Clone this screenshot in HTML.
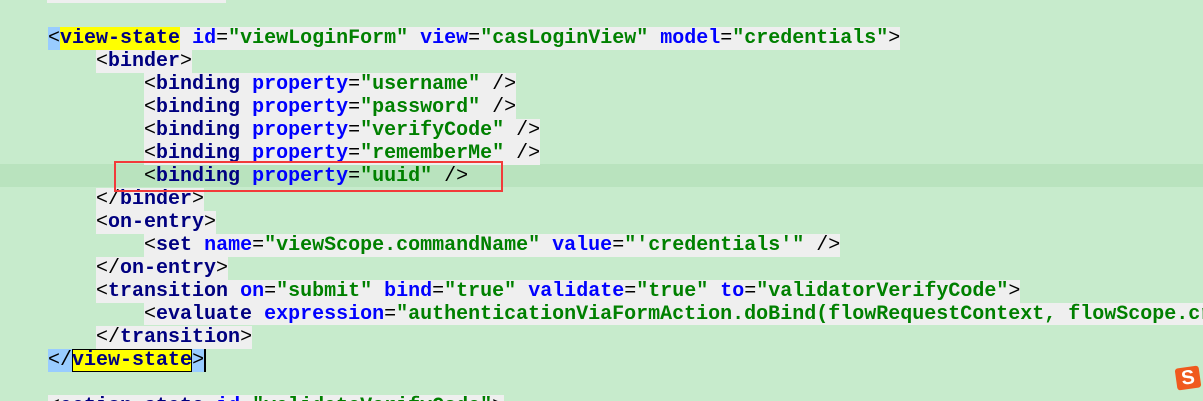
<!DOCTYPE html><html style="overflow:hidden"><head><style>
html,body{margin:0;width:1203px;height:401px;overflow:hidden}
body{background:#c7ebcc;font-family:"Liberation Mono",monospace;font-size:20px;position:relative}
.r{position:absolute;left:0;height:23px;line-height:25px;white-space:pre;width:1203px}
.t{background:#efefef}
.n{color:#000080;font-weight:bold}.a{color:#0000ff;font-weight:bold}.v{color:#008000;font-weight:bold}.p{color:#000}
.y{background:#ffff00}.b{background:#99ccff}
</style></head><body>
<div style="position:absolute;left:47px;top:0;width:179px;height:3px;background:#efefef"></div>
<div class="r" style="top:164px;background:#b9e3be"></div>
<div class="r" style="top:26px">    <span class="t"><span class="b p">&lt;</span><span class="n y">view-state</span> <span class="a">id</span>=<span class="v">"viewLoginForm"</span> <span class="a">view</span>=<span class="v">"casLoginView"</span> <span class="a">model</span>=<span class="v">"credentials"</span><span class="p">&gt;</span></span></div>
<div class="r" style="top:49px">        <span class="t"><span class="p">&lt;</span><span class="n">binder</span><span class="p">&gt;</span></span></div>
<div class="r" style="top:72px">            <span class="t"><span class="p">&lt;</span><span class="n">binding</span> <span class="a">property</span>=<span class="v">"username"</span> <span class="p">/&gt;</span></span></div>
<div class="r" style="top:95px">            <span class="t"><span class="p">&lt;</span><span class="n">binding</span> <span class="a">property</span>=<span class="v">"password"</span> <span class="p">/&gt;</span></span></div>
<div class="r" style="top:118px">            <span class="t"><span class="p">&lt;</span><span class="n">binding</span> <span class="a">property</span>=<span class="v">"verifyCode"</span> <span class="p">/&gt;</span></span></div>
<div class="r" style="top:141px">            <span class="t"><span class="p">&lt;</span><span class="n">binding</span> <span class="a">property</span>=<span class="v">"rememberMe"</span> <span class="p">/&gt;</span></span></div>
<div class="r" style="top:164px">            <span><span class="p">&lt;</span><span class="n">binding</span> <span class="a">property</span>=<span class="v">"uuid"</span> <span class="p">/&gt;</span></span></div>
<div class="r" style="top:187px">        <span class="t"><span class="p">&lt;/</span><span class="n">binder</span><span class="p">&gt;</span></span></div>
<div class="r" style="top:210px">        <span class="t"><span class="p">&lt;</span><span class="n">on-entry</span><span class="p">&gt;</span></span></div>
<div class="r" style="top:233px">            <span class="t"><span class="p">&lt;</span><span class="n">set</span> <span class="a">name</span>=<span class="v">"viewScope.commandName"</span> <span class="a">value</span>=<span class="v">"'credentials'"</span> <span class="p">/&gt;</span></span></div>
<div class="r" style="top:256px">        <span class="t"><span class="p">&lt;/</span><span class="n">on-entry</span><span class="p">&gt;</span></span></div>
<div class="r" style="top:279px">        <span class="t"><span class="p">&lt;</span><span class="n">transition</span> <span class="a">on</span>=<span class="v">"submit"</span> <span class="a">bind</span>=<span class="v">"true"</span> <span class="a">validate</span>=<span class="v">"true"</span> <span class="a">to</span>=<span class="v">"validatorVerifyCode"</span><span class="p">&gt;</span></span></div>
<div class="r" style="top:302px;overflow:hidden">            <span class="t"><span class="p">&lt;</span><span class="n">evaluate</span> <span class="a">expression</span>=<span class="v">"authenticationViaFormAction.doBind(flowRequestContext, flowScope.cr</span></span></div>
<div class="r" style="top:325px">        <span class="t"><span class="p">&lt;/</span><span class="n">transition</span><span class="p">&gt;</span></span></div>
<div class="r" style="top:348px">    <span class="b p">&lt;/</span><span class="n y" style="outline:1px solid #000;outline-offset:-1px">view-state</span><span class="b p">&gt;</span><span style="border-left:2px solid #000"></span></div>
<div class="r" style="top:394px;height:7px;overflow:hidden">    <span class="t"><span class="p">&lt;</span><span class="n">action-state</span> <span class="a">id</span>=<span class="v">"validateVerifyCode"</span><span class="p">&gt;</span></span></div>
<div style="position:absolute;left:114px;top:161px;width:385px;height:27px;border:2px solid #f23a3a"></div>
<div style="position:absolute;left:1176px;top:367px;width:24px;height:22px;background:#f05a1e;border-radius:3px;transform:rotate(-8deg);color:#fff;font:bold 20px 'Liberation Sans',sans-serif;text-align:center;line-height:22px">S</div>
</body></html>
